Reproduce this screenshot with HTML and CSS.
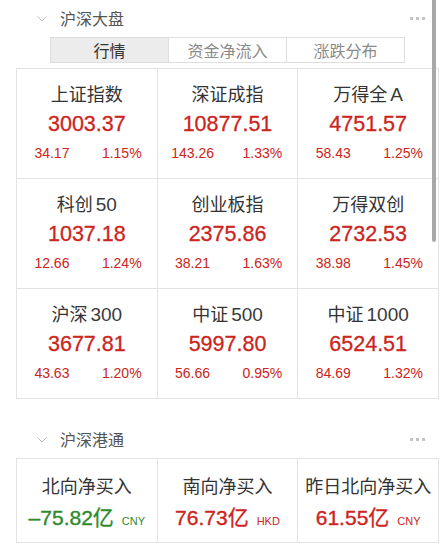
FILE: index.html
```html
<!DOCTYPE html>
<html lang="zh">
<head>
<meta charset="utf-8">
<link rel="stylesheet" href="styles.css">
</head>
<body>
<div class="page">
  <section class="sec">
    <div class="sec-head">
      <svg class="chev" width="10" height="6" viewBox="0 0 10 6"><polyline points="0.5,0.5 5,5 9.5,0.5" fill="none" stroke="#bdbdbd" stroke-width="1"/></svg>
      <span class="sec-title">沪深大盘</span>
      <span class="dots"><i></i><i></i><i></i></span>
    </div>
    <div class="tabs">
      <div class="tab active">行情</div>
      <div class="tab">资金净流入</div>
      <div class="tab">涨跌分布</div>
    </div>
    <div class="grid">
      <div class="cell"><div class="name">上证指数</div><div class="val up">3003.37</div><div class="chg up"><span>34.17</span><span>1.15%</span></div></div>
      <div class="cell"><div class="name">深证成指</div><div class="val up">10877.51</div><div class="chg up"><span>143.26</span><span>1.33%</span></div></div>
      <div class="cell"><div class="name">万得全<span class="lat">A</span></div><div class="val up">4751.57</div><div class="chg up"><span>58.43</span><span>1.25%</span></div></div>
      <div class="cell"><div class="name">科创<span class="lat">50</span></div><div class="val up">1037.18</div><div class="chg up"><span>12.66</span><span>1.24%</span></div></div>
      <div class="cell"><div class="name">创业板指</div><div class="val up">2375.86</div><div class="chg up"><span>38.21</span><span>1.63%</span></div></div>
      <div class="cell"><div class="name">万得双创</div><div class="val up">2732.53</div><div class="chg up"><span>38.98</span><span>1.45%</span></div></div>
      <div class="cell"><div class="name">沪深<span class="lat">300</span></div><div class="val up">3677.81</div><div class="chg up"><span>43.63</span><span>1.20%</span></div></div>
      <div class="cell"><div class="name">中证<span class="lat">500</span></div><div class="val up">5997.80</div><div class="chg up"><span>56.66</span><span>0.95%</span></div></div>
      <div class="cell"><div class="name">中证<span class="lat">1000</span></div><div class="val up">6524.51</div><div class="chg up"><span>84.69</span><span>1.32%</span></div></div>
    </div>
  </section>
  <section class="sec sec2">
    <div class="sec-head">
      <svg class="chev" width="10" height="6" viewBox="0 0 10 6"><polyline points="0.5,0.5 5,5 9.5,0.5" fill="none" stroke="#bdbdbd" stroke-width="1"/></svg>
      <span class="sec-title">沪深港通</span>
      <span class="dots"><i></i><i></i><i></i></span>
    </div>
    <div class="grid grid2">
      <div class="cell2"><div class="name">北向净买入</div><div class="big down">–75.82亿<span class="unit">CNY</span></div></div>
      <div class="cell2"><div class="name">南向净买入</div><div class="big up">76.73亿<span class="unit">HKD</span></div></div>
      <div class="cell2"><div class="name">昨日北向净买入</div><div class="big up">61.55亿<span class="unit">CNY</span></div></div>
    </div>
  </section>
  <div class="scrollbar"></div>
</div>
</body>
</html>
```
FILE: styles.css
```css
* { box-sizing: border-box; }
html, body { margin: 0; padding: 0; background: #fff; }
body {
  font-family: "Liberation Sans", "Noto Sans CJK SC", sans-serif;
  color: #333;
  width: 447px;
  height: 557px;
  overflow: hidden;
}
.page { position: relative; padding: 0 8px 0 16px; }
.sec-head {
  height: 36px;
  display: flex;
  align-items: center;
  padding-left: 21px;
}
.chev { margin-top: 1px; }
.sec-title {
  margin-left: 13px;
  font-size: 16px;
  color: #555;
  font-family: "Noto Sans CJK SC", sans-serif;
}
.dots { margin-left: auto; display: flex; gap: 3px; padding-right: 14px; }
.dots i { width: 3px; height: 3px; background: #c4c4c4; display: block; }
.tabs {
  margin-left: 34px;
  width: 355px;
  height: 26px;
  display: flex;
  border: 1px solid #dedede;
  margin-top: 1px;
}
.tab {
  flex: 1;
  display: flex;
  align-items: center;
  justify-content: center;
  font-family: "Noto Sans CJK SC", sans-serif;
  font-size: 16px;
  color: #8a8a8a;
  border-left: 1px solid #dedede;
}
.tab:first-child { border-left: none; }
.tab.active { background: #ececec; color: #333; }
.grid {
  margin-top: 5px;
  width: 423px;
  display: grid;
  grid-template-columns: 1fr 1fr 1fr;
  border-top: 1px solid #e3e3e3;
  border-left: 1px solid #e3e3e3;
}
.cell {
  height: 110px;
  border-right: 1px solid #e3e3e3;
  border-bottom: 1px solid #e3e3e3;
  display: flex;
  flex-direction: column;
  align-items: stretch;
  padding-top: 14px;
}
.name {
  text-align: center;
  font-size: 18px;
  line-height: 24px;
  color: #333;
}
.lat { font-size: 19px; margin-left: 3px; color: #3a3a3a; }
.val {
  text-align: center;
  font-size: 21.5px;
  line-height: 30px;
  margin-top: 2px;
  -webkit-text-stroke: 0.3px currentColor;
}
.chg {
  display: grid;
  grid-template-columns: 1fr 1fr;
  font-size: 14px;
  line-height: 20px;
  margin-top: 4px;
  text-align: center;
}
.up { color: #cc2420; }
.down { color: #2f8a2c; }
.sec2 .sec-head { margin-top: 21px; height: 38px; }
.grid2 { margin-top: 0; }
.cell2 {
  height: 84px;
  border-right: 1px solid #e3e3e3;
  border-bottom: 1px solid #e3e3e3;
  padding-top: 16px;
  text-align: center;
}
.big {
  font-size: 21px;
  line-height: 32px;
  margin-top: 3px;
  -webkit-text-stroke: 0.35px currentColor;
}
.unit { font-size: 11px; margin-left: 8px; -webkit-text-stroke: 0; }
.scrollbar {
  position: absolute;
  left: 432px;
  top: 0;
  width: 4px;
  height: 242px;
  background: #a8a8a8;
  border-radius: 0 0 2px 2px;
}
```
